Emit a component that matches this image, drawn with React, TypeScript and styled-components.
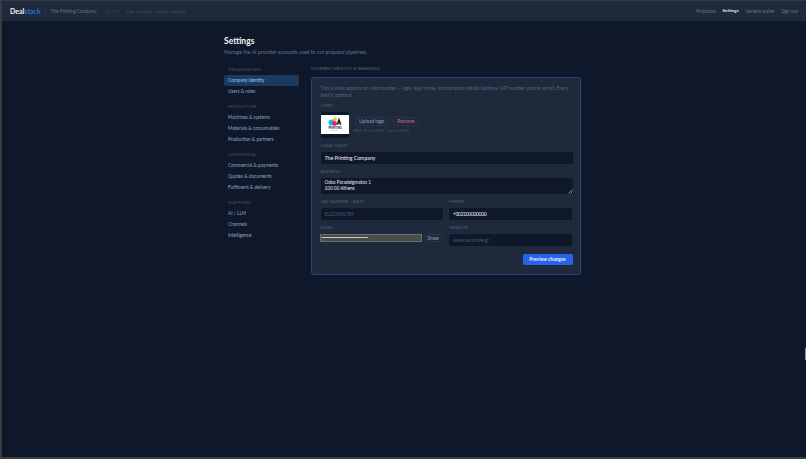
import React from "react";
import styled, { createGlobalStyle } from "styled-components";

const GlobalStyle = createGlobalStyle`
  html, body {
    margin: 0;
    height: 100%;
    overflow: hidden;
    background: #0f172a;
  }
  * {
    box-sizing: border-box;
  }
`;

const Page = styled.div`
  position: relative;
  width: 806px;
  height: 459px;
  overflow: hidden;
  background: #0f182b;
  border-left: 2px solid #3a3a40;
  border-bottom: 2px solid #35423f;
  font-family: Lato, "Noto Sans", sans-serif;
  color: #cbd5e1;
`;

const HomeIndicator = styled.div`
  position: absolute;
  left: 423px;
  bottom: -2px;
  width: 35px;
  height: 2px;
  background: #7f9490;
`;

const EdgeMark = styled.div`
  position: absolute;
  right: 0;
  top: 348px;
  width: 1px;
  height: 12px;
  background: #8a97aa;
`;

const TopBar = styled.header`
  display: flex;
  align-items: center;
  height: 21px;
  padding: 0 8px;
  background: #1e293b;
  border-top: 1px solid #33393f;
`;

const Brand = styled.div`
  font-size: 7px;
  font-weight: 700;
  color: #f1f5f9;
`;

const BrandAccent = styled.span`
  color: #2f6fd8;
`;

const Divider = styled.span`
  width: 1px;
  height: 7px;
  margin: 0 4.5px;
  background: #2c394c;
`;

const Company = styled.span`
  font-size: 4.7px;
  color: #64748b;
`;

const Version = styled.span`
  margin-left: 9px;
  font-size: 4.2px;
  color: #3f4d61;
`;

const UserInfo = styled.span`
  margin-left: 7px;
  font-size: 4.3px;
  text-rendering: geometricPrecision;
  color: #445267;
`;

const Nav = styled.nav`
  display: flex;
  gap: 6.5px;
  margin-left: auto;
`;

const NavLink = styled.a<{ $active?: boolean }>`
  font-size: ${(p) => (p.$active ? 4.5 : 4.7)}px;
  font-weight: ${(p) => (p.$active ? 700 : 400)};
  color: ${(p) => (p.$active ? "#e2e8f0" : "#64748b")};
`;

const Wrap = styled.main`
  width: 357px;
  margin-left: 222px;
  padding-top: 15px;
`;

const Title = styled.h1`
  margin: 0;
  font-size: 8.5px;
  line-height: 11px;
  font-weight: 700;
  color: #f1f5f9;
`;

const Subtitle = styled.p`
  margin: 1px 0 0;
  font-size: 5.1px;
  line-height: 8px;
  color: #64748b;
`;

const Columns = styled.div`
  display: grid;
  grid-template-columns: 75px 1fr;
  column-gap: 12px;
  margin-top: 11px;
`;

const Sidebar = styled.aside`
  display: flex;
  flex-direction: column;
  gap: 7px;
`;

const NavGroup = styled.div`
  display: flex;
  flex-direction: column;
`;

const GroupLabel = styled.div`
  height: 6px;
  margin-bottom: 2px;
  padding-left: 4px;
  font-size: 4.1px;
  line-height: 6px;
  letter-spacing: 0.15px;
  text-transform: uppercase;
  color: #475569;
`;

const SideItem = styled.div<{ $active?: boolean }>`
  height: 11px;
  padding-left: 4px;
  border-radius: 2px;
  font-size: 4.7px;
  line-height: 11px;
  background: ${(p) => (p.$active ? "#1c3a5e" : "transparent")};
  color: ${(p) => (p.$active ? "#93c5fd" : "#94a3b8")};
`;

const SectionHead = styled.div`
  height: 8px;
  margin-top: -2px;
  font-size: 4.1px;
  line-height: 8px;
  letter-spacing: 0.1px;
  text-transform: uppercase;
  color: #5b687c;
`;

const Card = styled.section`
  display: flex;
  flex-direction: column;
  height: 198px;
  margin-top: 4px;
  padding: 7px 7.5px 0 8.5px;
  background: #1e293b;
  border: 1.5px solid #24457a;
  border-radius: 3px;
`;

const Intro = styled.p`
  margin: 0;
  font-size: 4.7px;
  line-height: 7px;
  color: #56647a;
`;

const FieldLabel = styled.div`
  height: 6px;
  margin-bottom: 2.5px;
  font-size: 4.2px;
  line-height: 6px;
  letter-spacing: 0.15px;
  text-transform: uppercase;
  color: #55647a;
`;

const LogoSection = styled.div`
  margin-top: 4px;
`;

const LogoRow = styled.div`
  display: flex;
  gap: 6px;
  margin-top: 1.5px;
`;

const LogoBox = styled.div`
  display: flex;
  align-items: center;
  width: 28px;
  height: 26px;
  background: #0f172a;
  border-radius: 2px;
`;

const LogoActions = styled.div`
  padding-top: 5px;
`;

const ButtonRow = styled.div`
  display: flex;
  gap: 4px;
`;

const Ghost = styled.button<{ $danger?: boolean }>`
  height: 9px;
  padding: 0 3.5px;
  border: 1px solid #273449;
  border-radius: 2px;
  background: transparent;
  font-family: inherit;
  font-size: 4.8px;
  line-height: 7px;
  color: ${(p) => (p.$danger ? "#d1647a" : "#94a3b8")};
`;

const Hint = styled.div`
  margin: 2px 0 0 -1px;
  font-size: 3.9px;
  line-height: 6px;
  color: #475569;
`;

const FieldStack = styled.div`
  display: flex;
  flex-direction: column;
  gap: 5.5px;
  margin-top: 5.5px;
`;

const TwoCols = styled.div`
  display: grid;
  grid-template-columns: 122px 122.5px;
  column-gap: 6.5px;
  row-gap: 5.5px;
`;

const Input = styled.input<{ $squeeze?: number; $strong?: boolean }>`
  display: block;
  width: 100%;
  height: 12px;
  padding: 0 4px;
  border: 0;
  border-radius: 1.5px;
  outline: none;
  background: #0f172a;
  font-family: inherit;
  font-size: 5.2px;
  font-weight: ${(p) => (p.$strong ? 500 : 400)};
  letter-spacing: ${(p) => p.$squeeze ?? 0}px;
  color: #e2e8f0;

  &::placeholder {
    color: #45536a;
    opacity: 1;
  }
`;

const AreaWrap = styled.div`
  position: relative;
`;

const Area = styled.textarea`
  display: block;
  width: 100%;
  height: 16px;
  padding: 2.5px 4px;
  border: 0;
  border-radius: 1.5px;
  outline: none;
  resize: none;
  overflow: hidden;
  background: #0f172a;
  font-family: inherit;
  font-size: 4.7px;
  line-height: 5.5px;
  color: #e2e8f0;
`;

const Grip = styled.svg`
  position: absolute;
  right: 0;
  bottom: 0;
  width: 5px;
  height: 5px;
`;

const SecretRow = styled.div`
  display: flex;
  align-items: center;
  gap: 2px;
  margin-left: -1px;
`;

const Secret = styled.div`
  flex: 1;
  height: 8px;
  padding-left: 1px;
  border: 1px solid #6b6f70;
  background: #4a4c4c;
  font-family: "Liberation Sans", sans-serif;
  font-size: 4px;
  line-height: 5px;
  letter-spacing: -0.4px;
  white-space: nowrap;
  overflow: hidden;
  color: #f1f5f9;
`;

const ShowButton = styled(Ghost)`
  width: 19px;
  height: 8px;
  padding: 0;
  line-height: 6px;
`;

const Footer = styled.div`
  display: flex;
  justify-content: flex-end;
  margin-top: 8px;
`;

const Primary = styled.button`
  width: 50px;
  height: 11px;
  padding: 0;
  border: 0;
  border-radius: 1.5px;
  background: #2563eb;
  font-family: inherit;
  font-size: 4.9px;
  font-weight: 700;
  color: #e6eefc;
`;

const menu = [
  { label: "Organization", items: ["Company identity", "Users & roles"] },
  {
    label: "Production",
    items: ["Machines & systems", "Materials & consumables", "Production & partners"],
  },
  {
    label: "Commercial",
    items: ["Commercial & payments", "Quotes & documents", "Fulfilment & delivery"],
  },
  { label: "Platform", items: ["AI / LLM", "Channels", "Intelligence"] },
];

const Logo = () => (
  <svg width="28" height="19" viewBox="0 0 28 19">
    <rect width="28" height="19" fill="#fff" />
    <circle cx="10.5" cy="7.5" r="3" fill="#19b5e8" />
    <circle cx="13.5" cy="8.5" r="2.4" fill="#d9208a" />
    <circle cx="14" cy="4.4" r="2" fill="#f5c518" />
    <path d="M15.5 9.8 L18 2.4 L20.5 9.8 L18.8 9.8 L18 7.4 L17.2 9.8 Z" fill="#15151a" />
    <text x="14" y="14.2" fontSize="2.8" fontWeight="700" textAnchor="middle" fill="#15151a">
      PRINTING
    </text>
    <text x="14" y="16.4" fontSize="1.5" textAnchor="middle" fill="#777">
      COMPANY
    </text>
  </svg>
);

export default function App() {
  return (
    <Page>
      <GlobalStyle />
      <TopBar>
        <Brand>
          Deal<BrandAccent>stack</BrandAccent>
        </Brand>
        <Divider />
        <Company>The Printing Company</Company>
        <Version>v1.3.67</Version>
        <UserInfo>Dias Gounaris · admin, operator</UserInfo>
        <Nav>
          <NavLink>Proposals</NavLink>
          <NavLink $active>Settings</NavLink>
          <NavLink>Generic wallet</NavLink>
          <NavLink>Sign out</NavLink>
        </Nav>
      </TopBar>
      <Wrap>
        <Title>Settings</Title>
        <Subtitle>Manage the AI provider accounts used to run proposal pipelines.</Subtitle>
        <Columns>
          <Sidebar>
            {menu.map((group) => (
              <NavGroup key={group.label}>
                <GroupLabel>{group.label}</GroupLabel>
                {group.items.map((item) => (
                  <SideItem key={item} $active={item === "Company identity"}>
                    {item}
                  </SideItem>
                ))}
              </NavGroup>
            ))}
          </Sidebar>
          <div>
            <SectionHead>Company identity &amp; branding</SectionHead>
            <Card>
              <Intro>
                This is what appears on client quotes — logo, legal name, and company details
                (address, VAT number, phone, email). Every field is optional.
              </Intro>
              <LogoSection>
                <FieldLabel>Logo</FieldLabel>
                <LogoRow>
                  <LogoBox>
                    <Logo />
                  </LogoBox>
                  <LogoActions>
                    <ButtonRow>
                      <Ghost>Upload logo</Ghost>
                      <Ghost $danger>Remove</Ghost>
                    </ButtonRow>
                    <Hint>PNG, JPG, or SVG — max 500KB.</Hint>
                  </LogoActions>
                </LogoRow>
              </LogoSection>
              <FieldStack>
                <div>
                  <FieldLabel>Legal name</FieldLabel>
                  <Input $strong defaultValue="The Printing Company" />
                </div>
                <div>
                  <FieldLabel>Address</FieldLabel>
                  <AreaWrap>
                    <Area defaultValue={"Odos Paradeigmatos 1\n100 00 Athens"} />
                    <Grip viewBox="0 0 5 5">
                      <path d="M0.5 4.5 L4.5 0.5 M2.5 4.5 L4.5 2.5" stroke="#cbd5e1" strokeWidth="0.6" />
                    </Grip>
                  </AreaWrap>
                </div>
                <TwoCols>
                  <div>
                    <FieldLabel>VAT number / AΦM</FieldLabel>
                    <Input $squeeze={-0.35} placeholder="EL123456789" />
                  </div>
                  <div>
                    <FieldLabel>Phone</FieldLabel>
                    <Input $squeeze={-0.45} defaultValue="+302100000000" />
                  </div>
                  <div>
                    <FieldLabel>Email</FieldLabel>
                    <SecretRow>
                      <Secret>{"•".repeat(46)}</Secret>
                      <ShowButton>Show</ShowButton>
                    </SecretRow>
                  </div>
                  <div>
                    <FieldLabel>Website</FieldLabel>
                    <Input $squeeze={-0.15} placeholder="www.example.gr" />
                  </div>
                </TwoCols>
              </FieldStack>
              <Footer>
                <Primary>Preview changes</Primary>
              </Footer>
            </Card>
          </div>
        </Columns>
      </Wrap>
      <HomeIndicator />
      <EdgeMark />
    </Page>
  );
}
